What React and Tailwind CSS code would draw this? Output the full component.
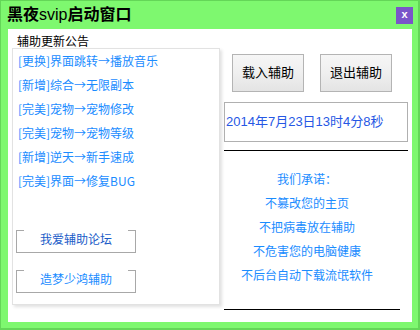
const news = [
  '[更换]界面跳转→播放音乐',
  '[新增]综合→无限副本',
  '[完美]宠物→宠物修改',
  '[完美]宠物→宠物等级',
  '[新增]逆天→新手速成',
  '[完美]界面→修复BUG',
];

const promises = ['我们承诺：', '不篡改您的主页', '不把病毒放在辅助', '不危害您的电脑健康', '不后台自动下载流氓软件'];

function LinkBox({ children, color }) {
  return (
    <div className={`relative w-[120px] h-[23px] border-x border-b border-[#a8a8a8] flex items-center justify-center pb-[3px] ${color}`}>
      <span className="absolute left-0 top-0 w-[7px] h-px bg-[#a8a8a8]" />
      <span className="absolute right-0 top-0 w-[7px] h-px bg-[#a8a8a8]" />
      {children}
    </div>
  );
}

function Button({ children }) {
  return (
    <button className="w-[72px] h-[38px] border border-[#b4b4b4] bg-gradient-to-b from-[#f6f6f6] via-[#efefef] to-[#e4e4e4] text-[13px] text-black">
      {children}
    </button>
  );
}

export default function App() {
  return (
    <div className="w-[420px] h-[330px] bg-[#7ef86f] border-l border-t border-r-2 border-b-2 border-[#64d658] flex flex-col font-['Liberation_Sans','Noto_Sans_CJK_SC',sans-serif] text-[12px]">
      <div className="h-[28px] flex items-center justify-between pl-[6px] pr-[5px]">
        <div className="text-[16px] font-bold text-black leading-none">
          黑夜<span className="font-normal">svip</span>启动窗口
        </div>
        <div className="w-[17px] h-[17px] bg-[#7a55c9] text-white text-[11px] font-bold flex items-center justify-center leading-none pb-[1px]">
          x
        </div>
      </div>

      <div className="ml-[7px] mr-[6px] mb-[6px] flex-1 bg-white flex">
        {/* left column */}
        <div className="pl-[4px] pt-[7px] flex flex-col">
          <div className="ml-[5px] h-[12px] leading-[12px] text-black">辅助更新公告</div>
          <div className="w-[208px] h-[257px] border border-[#e2e2e2] shadow-[2px_2px_3px_rgba(0,0,0,0.12)] flex flex-col">
            <div className="pl-[5px] text-[#1a8cff] font-['Noto_Sans_CJK_SC',sans-serif]">
              {news.map((n) => (
                <div key={n} className="h-[24px] leading-[24px] whitespace-nowrap">{n}</div>
              ))}
            </div>
            <div className="ml-[3px] mt-[37px] flex flex-col gap-[17px]">
              <LinkBox color="text-[#1a5cc8]">我爱辅助论坛</LinkBox>
              <LinkBox color="text-[#1a8cff]">造梦少鸿辅助</LinkBox>
            </div>
          </div>
        </div>

        {/* right column */}
        <div className="ml-[4px] pt-[25px] flex flex-col w-[184px]">
          <div className="ml-[8px] flex gap-[16px]">
            <Button>载入辅助</Button>
            <Button>退出辅助</Button>
          </div>
          <div className="mt-[10px] h-[40px] border border-[#b0b0b0] flex items-center pl-[1px] text-[13px] text-[#2657e4] whitespace-nowrap">
            2014年7月23日13时4分8秒
          </div>
          <div className="mt-[8px] h-px bg-black" />
          <div className="mt-[16px] w-[166px] text-center text-[#1a8cff] font-['Noto_Sans_CJK_SC',sans-serif]">
            {promises.map((p) => (
              <div key={p} className="h-[24px] leading-[24px] whitespace-nowrap">{p}</div>
            ))}
          </div>
          <div className="mt-[22px] w-[176px] h-px bg-black" />
        </div>
      </div>
    </div>
  );
}
